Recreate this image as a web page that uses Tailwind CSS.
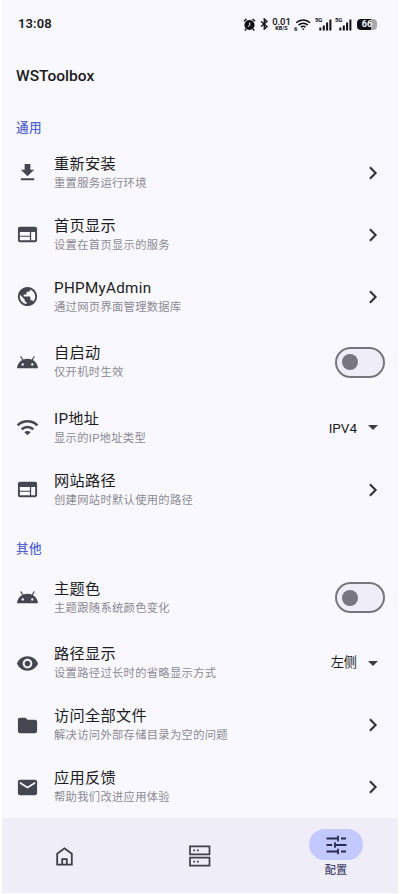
<!DOCTYPE html>
<html lang="zh-CN">
<head>
<meta charset="utf-8">
<meta name="viewport" content="width=device-width, initial-scale=1">
<title>WSToolbox</title>
<script src="https://cdn.jsdelivr.net/npm/@tailwindcss/browser@4"></script>
</head>
<body class="bg-white font-['Roboto','Noto_Sans_CJK_SC',sans-serif] text-[#1b1b21]">
<svg class="hidden">
  <symbol id="download" viewBox="0 0 24 24"><path d="M19 9h-4V3H9v6H5l7 7 7-7zM5 18v2h14v-2H5z"/></symbol>
  <symbol id="web" viewBox="0 0 24 24"><path d="M20 4H4c-1.100 0-1.990.9-1.990 2L2 18c0 1.100.9 2 2 2h16c1.100 0 2-.9 2-2V6c0-1.100-.9-2-2-2zm-5.500 14H4v-3.700h10.500V18zm0-4.800H4V9.500h10.500v3.700zM20 18h-4.200V9.500H20V18z"/></symbol>
  <symbol id="globe" viewBox="0 0 24 24"><path d="M12 2C6.480 2 2 6.480 2 12s4.480 10 10 10 10-4.480 10-10S17.520 2 12 2zm-1 17.930c-3.950-.49-7-3.850-7-7.930 0-.62.080-1.210.21-1.790L9 15v1c0 1.100.9 2 2 2v1.930zm6.900-2.540c-.26-.81-1-1.390-1.900-1.390h-1v-3c0-.55-.45-1-1-1H8v-2h2c.55 0 1-.45 1-1V7h2c1.100 0 2-.9 2-2v-.41c2.930 1.190 5 4.060 5 7.410 0 2.080-.8 3.970-2.100 5.390z"/></symbol>
  <symbol id="android" viewBox="0 0 24 24"><path d="M17.600 9.480l1.840-3.180c.16-.31.040-.69-.26-.85-.29-.15-.65-.06-.83.22l-1.880 3.240c-2.860-1.210-6.080-1.210-8.940 0L5.650 5.670c-.19-.29-.58-.38-.87-.2-.28.180-.37.540-.22.830L6.400 9.480C3.300 11.250 1.280 14.440 1 18h22c-.28-3.560-2.300-6.750-5.400-8.520zM7 15.250a1.250 1.250 0 1 1 0-2.500 1.250 1.250 0 0 1 0 2.500zm10 0a1.250 1.250 0 1 1 0-2.500 1.250 1.250 0 0 1 0 2.500z"/></symbol>
  <symbol id="wifi" viewBox="0 0 24 24"><g fill="none" stroke="currentColor" stroke-width="2.700"><path d="M1.700 9.700a14.600 14.600 0 0 1 20.600 0"/><path d="M5.900 14a8.600 8.600 0 0 1 12.200 0"/></g><path d="M8.700 16.900a4.700 4.700 0 0 1 6.600 0L12 20.200z"/></symbol>
  <symbol id="eye" viewBox="0 0 24 24"><path d="M12 4.500C7 4.500 2.730 7.610 1 12c1.730 4.390 6 7.500 11 7.500s9.270-3.110 11-7.500c-1.730-4.390-6-7.500-11-7.500zM12 17c-2.760 0-5-2.240-5-5s2.240-5 5-5 5 2.240 5 5-2.240 5-5 5zm0-8c-1.660 0-3 1.340-3 3s1.340 3 3 3 3-1.340 3-3-1.340-3-3-3z"/></symbol>
  <symbol id="folder" viewBox="0 0 24 24"><path d="M10 4H4c-1.100 0-1.990.9-1.990 2L2 18c0 1.100.9 2 2 2h16c1.100 0 2-.9 2-2V8c0-1.100-.9-2-2-2h-8l-2-2z"/></symbol>
  <symbol id="mail" viewBox="0 0 24 24"><path d="M20 4H4c-1.100 0-1.990.9-1.990 2L2 18c0 1.100.9 2 2 2h16c1.100 0 2-.9 2-2V6c0-1.100-.9-2-2-2zm0 4l-8 5-8-5V6l8 5 8-5v2z"/></symbol>
  <symbol id="chevron" viewBox="0 0 24 24"><path d="M8.300 5.200L15.100 12l-6.800 6.800" fill="none" stroke="currentColor" stroke-width="2.500"/></symbol>
  <symbol id="signal" viewBox="0 0 16 13"><path d="M3.300 9.500h2v3h-2zM6.800 7.500h2v5h-2zM10.100 4.500h2v8h-2zM13.400 1.500h2v11h-2z"/></symbol>
</svg>

<div class="mx-auto flex h-[893px] w-[396px] flex-col bg-[#faf8ff]">
  <header>
    <div class="flex h-12 items-center justify-between pl-4 pr-[21px]">
      <span class="text-[13px] font-semibold leading-4 tracking-[.1px]">13:08</span>
      <div class="flex h-[14px] items-center text-[#111115]">
        <svg class="h-[13px] w-[13px]" viewBox="0 0 13 13" fill="currentColor"><circle cx="6.500" cy="7" r="5.100"/><path d="M1 3.300L3.500 1M12 3.300L9.500 1M3 11l-1.200 1.500M10 11l1.200 1.500" stroke="currentColor" stroke-width="1.500"/><path d="M6.700 4.500V7.500L4.800 8.500" fill="none" stroke="#faf8ff"/></svg>
        <svg class="ml-1 h-[12px] w-[9px]" viewBox="0 0 9 12" fill="none" stroke="currentColor" stroke-width="1.400"><path d="M1 3.500l6 5-2.700 2.500V1L7 3.500l-6 5"/></svg>
        <div class="ml-[3px] w-[19px] text-center font-medium"><div class="text-[9.500px] leading-[8px] tracking-[-.1px]">0.01</div><div class="text-[5.500px] font-bold leading-[5px]">KB/S</div></div>
        <svg class="ml-[3px] h-[13px] w-[18px]" viewBox="0 0 18 13" fill="none" stroke="currentColor" stroke-width="1.500"><path d="M2.200 4.800a10 10 0 0 1 14 0M4.600 7.100a6.500 6.500 0 0 1 9.200 0M6.900 9.300a3.200 3.200 0 0 1 4.600 0"/><path d="M7.800 10.400h2.800l-1.400 1.900z" fill="currentColor" stroke="none"/><text x="0" y="12.700" font-size="6" font-weight="700" fill="currentColor" stroke="none">6</text></svg>
        <div class="relative ml-1 h-[13px] w-4"><svg class="h-[13px] w-4" fill="currentColor"><use href="#signal"/></svg><span class="absolute -left-px -top-px text-[6px] font-bold leading-[6px] tracking-[-.2px]">5G</span></div>
        <div class="relative ml-1 h-[13px] w-4"><svg class="h-[13px] w-4" fill="currentColor"><use href="#signal"/></svg><span class="absolute -left-px -top-px text-[6px] font-bold leading-[6px] tracking-[-.2px]">5G</span></div>
        <div class="ml-[5px] flex h-[11px] w-[20px] items-center justify-center rounded-[4px] bg-linear-to-r from-[#111115] from-70% to-[#aaa9b0] to-70% text-[9px] font-bold leading-[11px] text-white">66</div>
      </div>
    </div>
    <div class="flex h-[55px] items-center pl-[14px]"><h1 class="text-[15.500px] font-medium leading-5 tracking-[.02px]">WSToolbox</h1></div>
  </header>

  <main class="flex-none">
    <div class="flex h-[38.500px] items-end pb-[4px] pl-[14px]"><h2 class="text-[12.600px] font-medium leading-5 tracking-[.3px] text-[#5465d2]">通用</h2></div>

    <div class="flex h-[62px] items-center pl-[14px] pr-[15px]">
      <svg class="h-[23px] w-[23px] text-[#45464f]" fill="currentColor"><use href="#download"/></svg>
      <div class="ml-[15px] flex-1"><div class="text-[15.200px] leading-[21px] tracking-[.3px]">重新安装</div><div class="text-[11.300px] leading-[17px] tracking-[.3px] text-[#8b8a92]">重置服务运行环境</div></div>
      <svg class="h-[20px] w-[20px] text-[#303036]"><use href="#chevron"/></svg>
    </div>
    <div class="flex h-[62px] items-center pl-[14px] pr-[15px]">
      <svg class="h-[23px] w-[23px] text-[#45464f]" fill="currentColor"><use href="#web"/></svg>
      <div class="ml-[15px] flex-1"><div class="text-[15.200px] leading-[21px] tracking-[.3px]">首页显示</div><div class="text-[11.300px] leading-[17px] tracking-[.3px] text-[#8b8a92]">设置在首页显示的服务</div></div>
      <svg class="h-[20px] w-[20px] text-[#303036]"><use href="#chevron"/></svg>
    </div>
    <div class="flex h-[62px] items-center pl-[14px] pr-[15px]">
      <svg class="h-[23px] w-[23px] text-[#45464f]" fill="currentColor"><use href="#globe"/></svg>
      <div class="ml-[15px] flex-1"><div class="text-[15.200px] leading-[21px] tracking-[.3px]">PHPMyAdmin</div><div class="text-[11.300px] leading-[17px] tracking-[.3px] text-[#8b8a92]">通过网页界面管理数据库</div></div>
      <svg class="h-[20px] w-[20px] text-[#303036]"><use href="#chevron"/></svg>
    </div>
    <div class="flex h-[69px] items-center pl-[14px] pr-[13px]">
      <svg class="h-[23px] w-[23px] text-[#45464f]" fill="currentColor"><use href="#android"/></svg>
      <div class="ml-[15px] flex-1"><div class="text-[15.200px] leading-[21px] tracking-[.3px]">自启动</div><div class="text-[11.300px] leading-[17px] tracking-[.3px] text-[#8b8a92]">仅开机时生效</div></div>
      <div class="flex h-[31px] w-[50px] items-center rounded-full border-2 border-[#777680] bg-[#efedf8] pl-[5px]"><div class="h-4 w-4 rounded-full bg-[#777680]"></div></div>
    </div>
    <div class="flex h-[62px] items-center pl-[14px] pr-[20px]">
      <svg class="h-[23px] w-[23px] text-[#45464f]" fill="currentColor"><use href="#wifi"/></svg>
      <div class="ml-[15px] flex-1"><div class="text-[15.200px] leading-[21px] tracking-[.3px]">IP地址</div><div class="text-[11.300px] leading-[17px] tracking-[.3px] text-[#8b8a92]">显示的IP地址类型</div></div>
      <span class="text-[13.500px] leading-5">IPV4</span>
      <svg class="ml-[11px] h-[5px] w-[10px] text-[#3c3c44]" viewBox="0 0 10 5" fill="currentColor"><path d="M0 0h10L5 5z"/></svg>
    </div>
    <div class="flex h-[62px] items-center pl-[14px] pr-[15px]">
      <svg class="h-[23px] w-[23px] text-[#45464f]" fill="currentColor"><use href="#web"/></svg>
      <div class="ml-[15px] flex-1"><div class="text-[15.200px] leading-[21px] tracking-[.3px]">网站路径</div><div class="text-[11.300px] leading-[17px] tracking-[.3px] text-[#8b8a92]">创建网站时默认使用的路径</div></div>
      <svg class="h-[20px] w-[20px] text-[#303036]"><use href="#chevron"/></svg>
    </div>

    <div class="flex h-[42.500px] items-end pb-[4px] pl-[14px]"><h2 class="text-[12.600px] font-medium leading-5 tracking-[.3px] text-[#5465d2]">其他</h2></div>

    <div class="flex h-[69px] items-center pl-[14px] pr-[13px]">
      <svg class="h-[23px] w-[23px] text-[#45464f]" fill="currentColor"><use href="#android"/></svg>
      <div class="ml-[15px] flex-1"><div class="text-[15.200px] leading-[21px] tracking-[.3px]">主题色</div><div class="text-[11.300px] leading-[17px] tracking-[.3px] text-[#8b8a92]">主题跟随系统颜色变化</div></div>
      <div class="flex h-[31px] w-[50px] items-center rounded-full border-2 border-[#777680] bg-[#efedf8] pl-[5px]"><div class="h-4 w-4 rounded-full bg-[#777680]"></div></div>
    </div>
    <div class="flex h-[62px] items-center pl-[14px] pr-[20px]">
      <svg class="h-[23px] w-[23px] text-[#45464f]" fill="currentColor"><use href="#eye"/></svg>
      <div class="ml-[15px] flex-1"><div class="text-[15.200px] leading-[21px] tracking-[.3px]">路径显示</div><div class="text-[11.300px] leading-[17px] tracking-[.3px] text-[#8b8a92]">设置路径过长时的省略显示方式</div></div>
      <span class="text-[13.200px] leading-5">左侧</span>
      <svg class="ml-[11px] h-[5px] w-[10px] text-[#3c3c44]" viewBox="0 0 10 5" fill="currentColor"><path d="M0 0h10L5 5z"/></svg>
    </div>
    <div class="flex h-[62px] items-center pl-[14px] pr-[15px]">
      <svg class="h-[23px] w-[23px] text-[#45464f]" fill="currentColor"><use href="#folder"/></svg>
      <div class="ml-[15px] flex-1"><div class="text-[15.200px] leading-[21px] tracking-[.3px]">访问全部文件</div><div class="text-[11.300px] leading-[17px] tracking-[.3px] text-[#8b8a92]">解决访问外部存储目录为空的问题</div></div>
      <svg class="h-[20px] w-[20px] text-[#303036]"><use href="#chevron"/></svg>
    </div>
    <div class="flex h-[62px] items-center pl-[14px] pr-[15px]">
      <svg class="h-[23px] w-[23px] text-[#45464f]" fill="currentColor"><use href="#mail"/></svg>
      <div class="ml-[15px] flex-1"><div class="text-[15.200px] leading-[21px] tracking-[.3px]">应用反馈</div><div class="text-[11.300px] leading-[17px] tracking-[.3px] text-[#8b8a92]">帮助我们改进应用体验</div></div>
      <svg class="h-[20px] w-[20px] text-[#303036]"><use href="#chevron"/></svg>
    </div>
  </main>

  <nav class="grid min-h-0 flex-1 grid-cols-[124px_1fr_124px] bg-[#efedf8] text-[#3e3e49]">
    <div class="flex justify-center pt-[29px]">
      <svg class="h-[19px] w-[17px]" viewBox="0 0 17 19" fill="none" stroke="currentColor" stroke-width="1.800"><path d="M1.200 17.600V6.700L8.500 1.300l7.300 5.400v10.900z"/><path d="M6.200 17.500v-5.300h4.600v5.300"/></svg>
    </div>
    <div class="flex justify-center pt-[27px]">
      <svg class="h-[22px] w-[22px]" viewBox="0 0 22 22" fill="none" stroke="currentColor" stroke-width="1.700"><path d="M1 1.400h19.500v8H1zM1 12.600h19.500v8H1z"/><path d="M4.300 5.400h1.800M8 5.400h1.800M4.300 16.600h1.800M8 16.600h1.800"/></svg>
    </div>
    <div class="flex flex-col items-center pt-[11px]">
      <div class="flex h-[31px] w-[54px] items-center justify-center rounded-full bg-[#c3c8ff] text-[#292c52]">
        <svg class="h-[20px] w-[21px]" viewBox="0 0 21 20" fill="none" stroke="currentColor" stroke-width="1.800"><path d="M.5 3.500h11.600M15 3.500h5M.5 10h5.700M9 10h11.500M.5 16.500h11.600M15 16.500h5M12 .8v5.400M9 7.300v5.400M12 13.800v5.400"/></svg>
      </div>
      <span class="mt-[3px] text-[11.200px] font-medium leading-[16px] text-[#45456b]">配置</span>
    </div>
  </nav>
</div>
</body>
</html>
